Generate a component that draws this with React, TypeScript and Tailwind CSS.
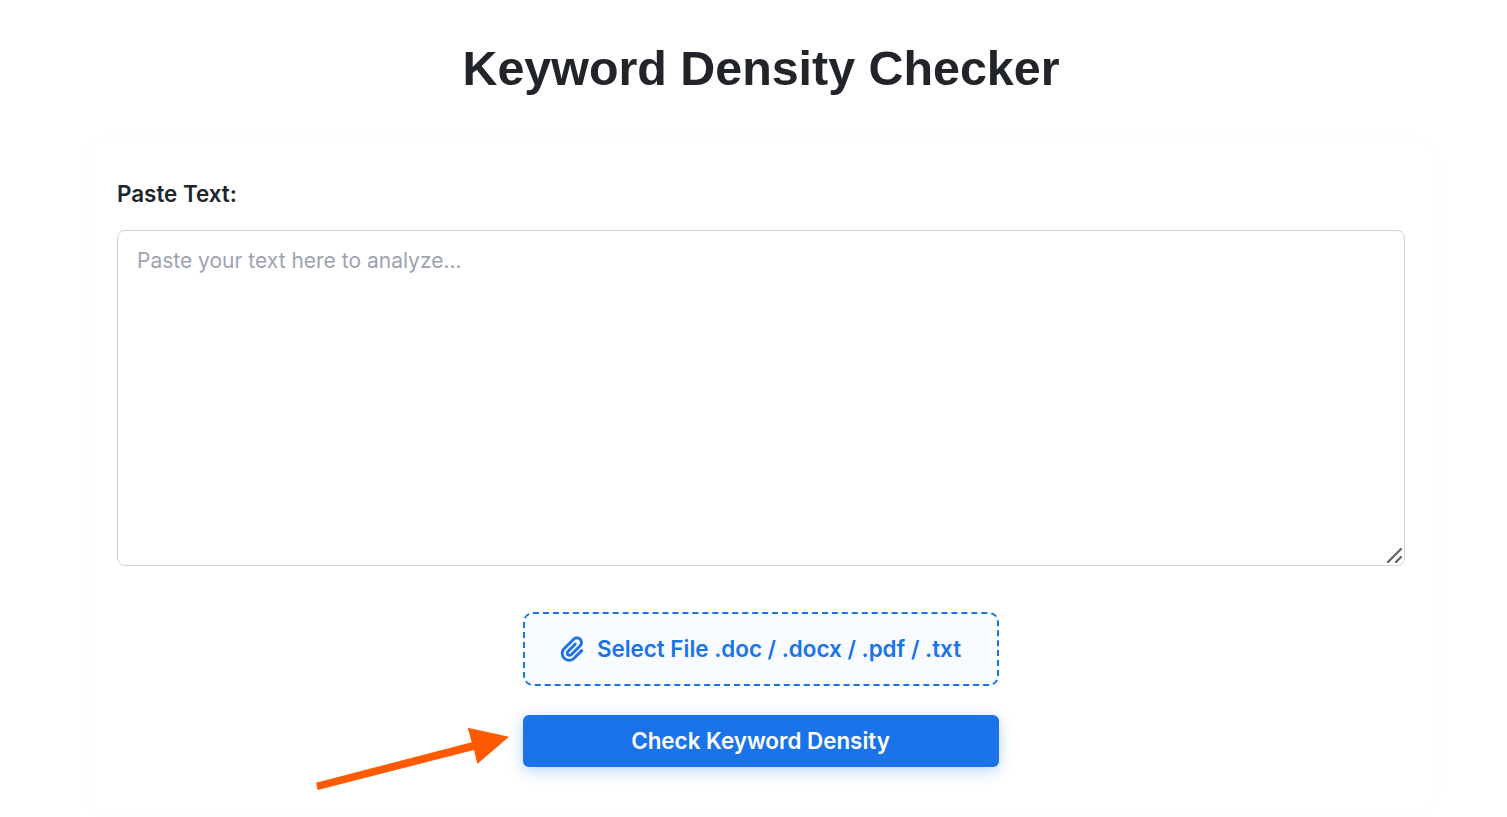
import { FaPaperclip } from "react-icons/fa6";

export default function App() {
  return (
    <div className="min-h-[817px] bg-white pl-[89px] pr-[74px] pt-[39px] font-['Inter',sans-serif] overflow-hidden">
      <h1 className="text-center font-['Liberation_Sans',sans-serif] text-[48.4px] font-bold leading-[58px] text-[#212529]">
        Keyword Density Checker
      </h1>
      <div className="relative mt-[44px] h-[668px] rounded-[16px] bg-white px-[28px] pt-[39px] shadow-[0_2px_20px_rgba(0,0,0,0.025)]">
        <label className="block text-[22.4px] font-semibold leading-[28px] text-[#212529]">
          Paste Text:
        </label>
        <div className="relative mt-[22px]">
          <textarea
            placeholder="Paste your text here to analyze..."
            className="block h-[336px] w-full resize-none rounded-[8px] border border-[#ced4da] bg-white px-[19px] py-[15px] text-[21px] leading-[30px] text-[#212529] placeholder:text-[#9ca3af]"
          />
          <svg className="pointer-events-none absolute bottom-0 right-0" width="20" height="20" viewBox="0 0 20 20">
            <path d="M3 16 L16 3 M11 16 L16 11" stroke="#666666" strokeWidth="2.4" strokeLinecap="round" fill="none" />
          </svg>
        </div>
        <div className="mt-[46px] flex flex-col items-center gap-[29px]">
          <button className="flex h-[74px] w-[476px] items-center justify-center gap-[12px] rounded-[10px] border-2 border-dashed border-[#1a73e8] bg-[#f8fbff] pr-[2px] text-[22.4px] font-semibold leading-[28px] text-[#1a73e8]">
            <FaPaperclip className="h-[26px] w-[26px]" />
            Select File .doc / .docx / .pdf / .txt
          </button>
          <button className="h-[52px] w-[476px] rounded-[6px] bg-[#1a73e8] pr-[1px] text-[22.4px] font-semibold leading-[28px] text-white shadow-[0_4px_15px_rgba(26,115,232,0.3)]">
            Check Keyword Density
          </button>
        </div>
        <svg className="absolute left-[227px] top-[585px] overflow-visible" width="200" height="65" viewBox="0 0 200 65">
          <path d="M0 56.7 L155.7 16.3 L151.7 1.7 L193 10.7 L161.3 38 L158 24 L1.7 64 Z" fill="#ff5a00" />
        </svg>
      </div>
    </div>
  );
}
